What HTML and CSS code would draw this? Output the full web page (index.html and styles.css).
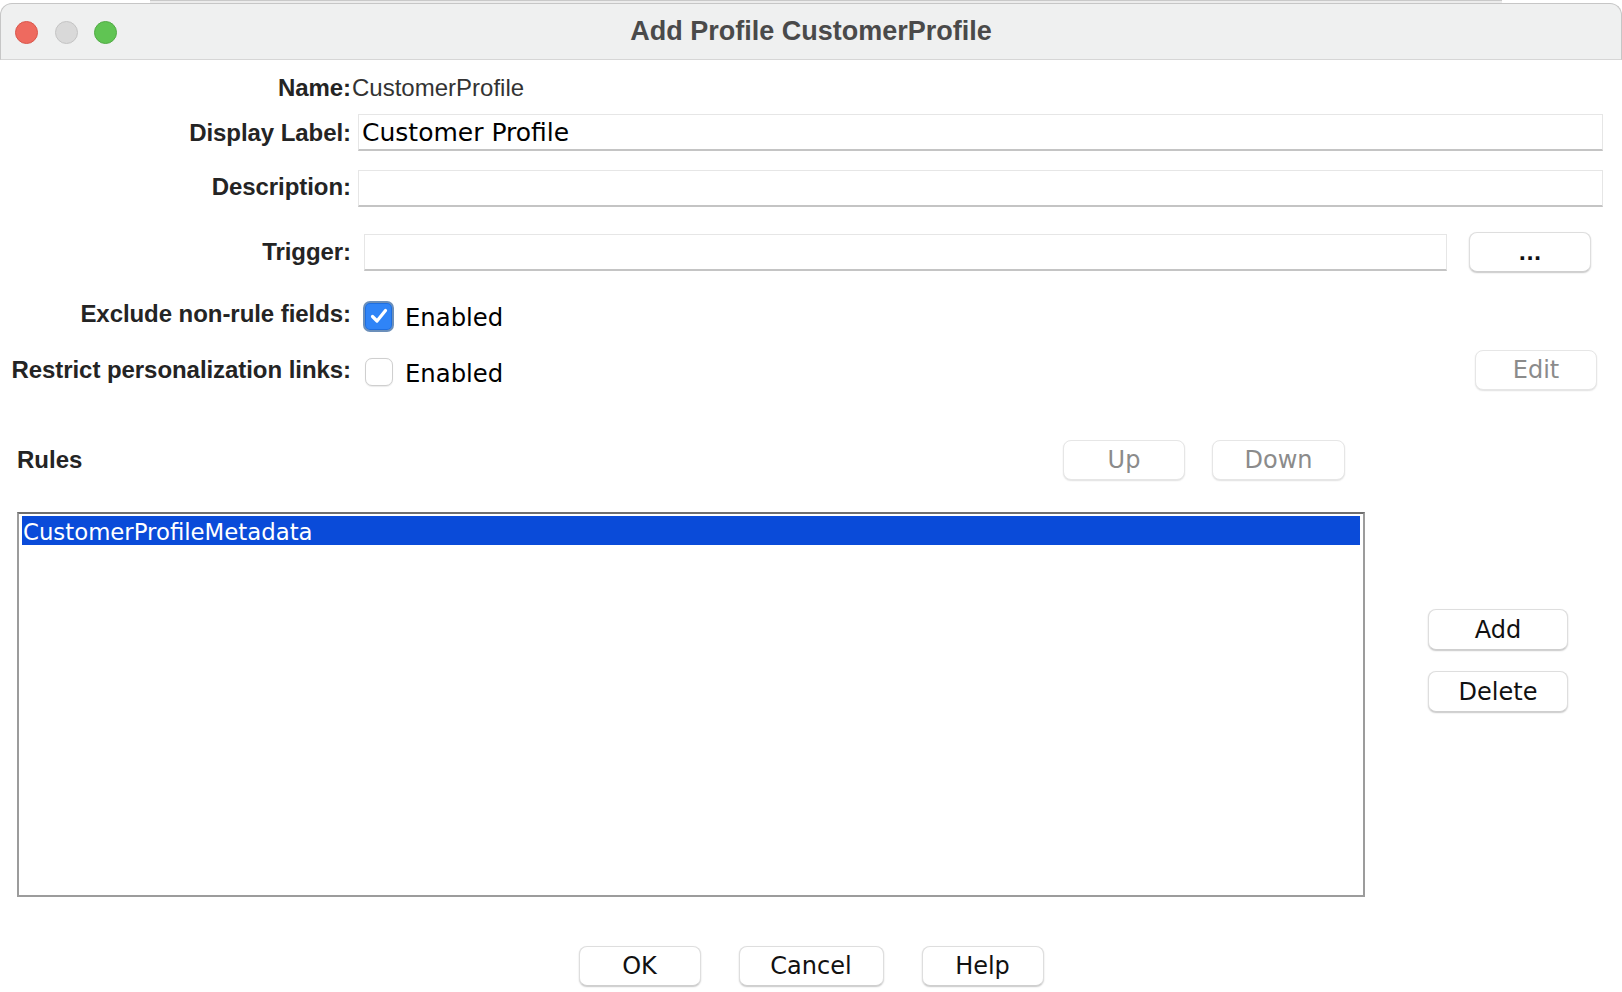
FILE: index.html
```html
<!DOCTYPE html>
<html lang="en">
<head>
<meta charset="utf-8">
<title>Add Profile CustomerProfile</title>
<link rel="stylesheet" href="styles.css">
</head>
<body>
<div class="backdrop"><div class="backdrop-line"></div></div>
<div class="window">
  <div class="titlebar">
    <div class="lights">
      <span class="light light-red"></span>
      <span class="light light-gray"></span>
      <span class="light light-green"></span>
    </div>
    <div class="title">Add Profile CustomerProfile</div>
    <div class="titlebar-spacer"></div>
  </div>

  <div class="content">
    <div class="row row-name">
      <div class="label">Name:</div>
      <div class="name-value">CustomerProfile</div>
    </div>

    <div class="row row-display">
      <div class="label">Display Label:</div>
      <div class="field field-wide">Customer Profile</div>
    </div>

    <div class="row row-desc">
      <div class="label">Description:</div>
      <div class="field field-wide"></div>
    </div>

    <div class="row row-trigger">
      <div class="label">Trigger:</div>
      <div class="field field-trigger"></div>
      <div class="btn btn-dots">...</div>
    </div>

    <div class="row row-exclude">
      <div class="label">Exclude non-rule fields:</div>
      <div class="check check-on">
        <svg viewBox="0 0 24 24" width="24" height="24"><path d="M5.5 12.5 L10 17 L18.5 6.5" fill="none" stroke="#fff" stroke-width="3.2" stroke-linecap="round" stroke-linejoin="round"/></svg>
      </div>
      <div class="check-text">Enabled</div>
    </div>

    <div class="row row-restrict">
      <div class="label">Restrict personalization links:</div>
      <div class="check check-off"></div>
      <div class="check-text">Enabled</div>
      <div class="btn btn-disabled btn-edit">Edit</div>
    </div>

    <div class="row row-rules">
      <div class="rules-label">Rules</div>
      <div class="btn btn-disabled btn-up">Up</div>
      <div class="btn btn-disabled btn-down">Down</div>
    </div>

    <div class="list-area">
      <div class="list">
        <div class="list-item selected">CustomerProfileMetadata</div>
      </div>
      <div class="side-buttons">
        <div class="btn btn-side">Add</div>
        <div class="btn btn-side">Delete</div>
      </div>
    </div>

    <div class="footer">
      <div class="btn btn-ok">OK</div>
      <div class="btn btn-cancel">Cancel</div>
      <div class="btn btn-help">Help</div>
    </div>
  </div>
</div>
</body>
</html>
```
FILE: styles.css
```css
* { box-sizing: border-box; }

html, body {
  margin: 0;
  padding: 0;
}

body {
  width: 1622px;
  height: 992px;
  overflow: hidden;
  background: #ffffff;
  font-family: "Liberation Sans", Arial, sans-serif;
  color: #222;
}

.backdrop {
  height: 3px;
  padding: 0 120px 0 150px;
}

.backdrop-line {
  height: 3px;
  border-top: 1px solid #c9c9c9;
  background: #ececec;
}

.window {
  background: #fff;
}

.titlebar {
  height: 57px;
  display: grid;
  grid-template-columns: 1fr auto 1fr;
  align-items: center;
  background: #eff0f0;
  border: 1px solid #c6c6c6;
  border-bottom-color: #d6d6d6;
  border-radius: 12px 12px 0 0;
}

.lights {
  display: flex;
  gap: 16.5px;
  padding-left: 14px;
  padding-top: 1px;
}

.light {
  width: 23px;
  height: 23px;
  border-radius: 50%;
  display: block;
}

.light-red { background: #ee6a5f; border: 1px solid #d9574c; }
.light-gray { background: #d9d9d9; border: 1px solid #c4c4c4; }
.light-green { background: #60c453; border: 1px solid #51ab45; }

.title {
  font-weight: bold;
  font-size: 27px;
  color: #4a4a4a;
}

.content {
  display: flex;
  flex-direction: column;
}

.row {
  display: flex;
  align-items: center;
}

.label {
  width: 351px;
  flex: none;
  text-align: right;
  font-weight: bold;
  font-size: 24px;
  letter-spacing: -0.06px;
  color: #242424;
  white-space: nowrap;
}

.row-name { margin-top: 12px; height: 32px; }
.name-value {
  font-size: 24px;
  color: #333;
  padding-left: 1px;
}

.field {
  height: 37px;
  background: #fff;
  border: 1px solid #e6e6e6;
  border-bottom: 2px solid #c4c4c4;
  font-family: "DejaVu Sans", sans-serif;
  font-size: 25px;
  color: #000;
  padding-left: 3px;
  display: flex;
  align-items: center;
}

.field-wide {
  margin-left: 7px;
  width: 1245px;
}

.row-display { margin-top: 10px; height: 37px; }
.row-desc { margin-top: 19px; height: 37px; }
.row-desc .label { margin-top: -3px; }
.row-trigger { margin-top: 25px; height: 40px; }

.field-trigger {
  margin-left: 13px;
  width: 1083px;
}

.btn {
  display: flex;
  align-items: center;
  justify-content: center;
  height: 40px;
  background: #fff;
  border: 1px solid #dedede;
  border-bottom-color: #cfcfcf;
  border-radius: 8px;
  box-shadow: 0 1px 1.5px rgba(0, 0, 0, 0.22);
  font-family: "DejaVu Sans", sans-serif;
  font-size: 24px;
  color: #111;
  flex: none;
}

.btn-disabled {
  color: #8b8b8b;
  border-color: #e6e6e6;
  box-shadow: 0 1px 1.5px rgba(0, 0, 0, 0.12);
}

.btn-dots {
  margin-left: 22px;
  width: 122px;
  font-weight: bold;
  font-size: 20px;
  padding-top: 2px;
}

.row-exclude { margin-top: 24px; height: 36px; }
.row-restrict { margin-top: 18px; height: 40px; }

.check {
  flex: none;
  border-radius: 7px;
  display: flex;
  align-items: center;
  justify-content: center;
}

.check-on {
  margin-left: 12px;
  width: 31px;
  height: 31px;
  margin-top: 4px;
  background: #2f84f7;
  border: 2px solid #6b8fba;
  box-shadow: inset 0 0 0 1px #1e6ee0;
}

.check-off {
  margin-left: 14px;
  width: 28px;
  height: 28px;
  margin-top: 4px;
  background: #fff;
  border: 1px solid #cfcfcf;
  box-shadow: 0 0.5px 1px rgba(0, 0, 0, 0.08);
}

.check-text {
  margin-left: 11px;
  font-family: "DejaVu Sans", sans-serif;
  font-size: 24.3px;
  color: #000;
  margin-top: 6px;
}

.row-restrict .check-text { margin-left: 12px; }

.btn-edit {
  margin-left: auto;
  margin-right: 25px;
  width: 122px;
}

.row-rules {
  margin-top: 50px;
  height: 40px;
  padding-left: 17px;
}

.rules-label {
  font-weight: bold;
  font-size: 24px;
  color: #242424;
  flex: 1;
}

.btn-up { width: 122px; }
.btn-down { width: 133px; margin-left: 27px; margin-right: 277px; }

.list-area {
  margin-top: 32px;
  display: flex;
  padding-left: 17px;
}

.list {
  width: 1348px;
  height: 385px;
  border: 2px solid #9c9c9c;
  border-top-color: #6f6f6f;
  padding: 2px 3px 2px 3px;
  flex: none;
}

.list-item {
  height: 29px;
  display: flex;
  align-items: center;
  padding-left: 1px;
  padding-top: 2px;
  font-family: "DejaVu Sans", sans-serif;
  font-size: 22.8px;
}

.list-item.selected {
  background: #0a4bd9;
  color: #fff;
}

.side-buttons {
  margin-left: 63px;
  padding-top: 97px;
  display: flex;
  flex-direction: column;
  gap: 21px;
}

.btn-side {
  width: 140px;
  height: 41px;
}

.footer {
  margin-top: 49px;
  display: flex;
  justify-content: center;
  gap: 38px;
}

.btn-ok, .btn-help { width: 122px; }
.btn-cancel { width: 145px; }
```
